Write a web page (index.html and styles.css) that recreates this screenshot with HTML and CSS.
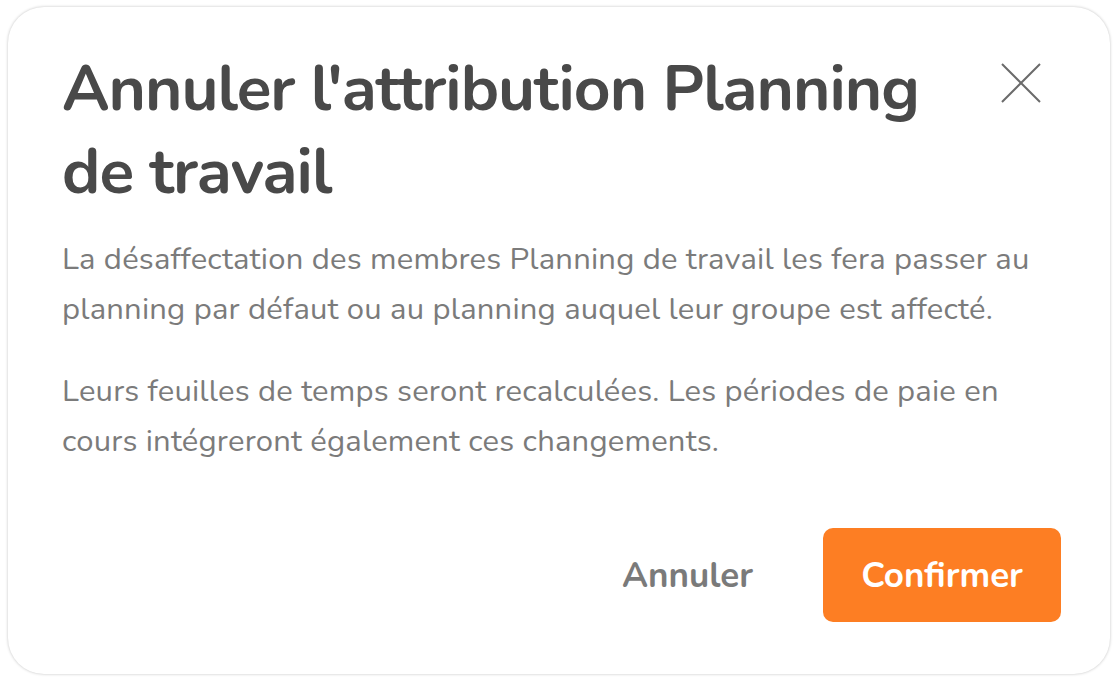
FILE: index.html
```html
<!DOCTYPE html>
<html lang="fr">
<head>
    <meta charset="UTF-8">
    <meta name="viewport" content="width=device-width, initial-scale=1.0">
    <title>Annuler l'attribution</title>
    <link rel="stylesheet" href="styles.css">
</head>
<body>
    <div class="modal">
        <div class="modalHeader">
            <h1 class="modalTitle">Annuler l'attribution Planning de travail</h1>
            <button class="closeBtn" type="button" aria-label="Fermer">
                <svg width="40" height="40" viewBox="0 0 40 40">
                    <path d="M1 1 L39 39 M39 1 L1 39" stroke="#6b6b6b" stroke-width="2" fill="none"/>
                </svg>
            </button>
        </div>
        <p class="modalText">La désaffectation des membres Planning de travail les fera passer au planning par défaut ou au planning auquel leur groupe est affecté.</p>
        <p class="modalText">Leurs feuilles de temps seront recalculées. Les périodes de paie en cours intégreront également ces changements.</p>
        <div class="modalFooter">
            <button class="btnCancel" type="button">Annuler</button>
            <button class="btnConfirm" type="button">Confirmer</button>
        </div>
    </div>
</body>
</html>
```

FILE: styles.css
```css
body {
    margin: 0;
    padding: 7px 8px 8px 8px;
    background: #fff;
    font-family: "Nunito", "Lato", "Open Sans", sans-serif;
}

.modal {
    background: #fff;
    border-radius: 36px;
    box-shadow: 0 0 3px rgba(0, 0, 0, 0.25);
    padding: 41px 49px 52px 54px;
    height: 667px;
    box-sizing: border-box;
}

.modalHeader {
    display: flex;
    justify-content: space-between;
    align-items: flex-start;
}

.modalTitle {
    margin: 0;
    max-width: 930px;
    font-size: 64px;
    line-height: 83px;
    font-weight: 700;
    letter-spacing: -1px;
    color: #494949;
}

.closeBtn {
    background: none;
    border: none;
    padding: 0;
    margin: 15px 20px 0 0;
    cursor: pointer;
}

.modalText {
    margin: 20px 0 0 0;
    font-size: 31px;
    line-height: 50px;
    letter-spacing: 0.2px;
    color: #7b7b7b;
}

.modalText + .modalText {
    margin-top: 32px;
}

.modalFooter {
    display: flex;
    justify-content: flex-end;
    align-items: center;
    gap: 70px;
    margin-top: 62px;
}

.btnCancel {
    background: none;
    border: none;
    padding: 0;
    font-family: inherit;
    font-size: 35px;
    font-weight: 700;
    color: #7a7a7a;
    cursor: pointer;
}

.btnConfirm {
    width: 238px;
    height: 94px;
    background: #fd7e23;
    border: none;
    border-radius: 10px;
    font-family: inherit;
    font-size: 35px;
    font-weight: 700;
    color: #fff;
    cursor: pointer;
}
```
